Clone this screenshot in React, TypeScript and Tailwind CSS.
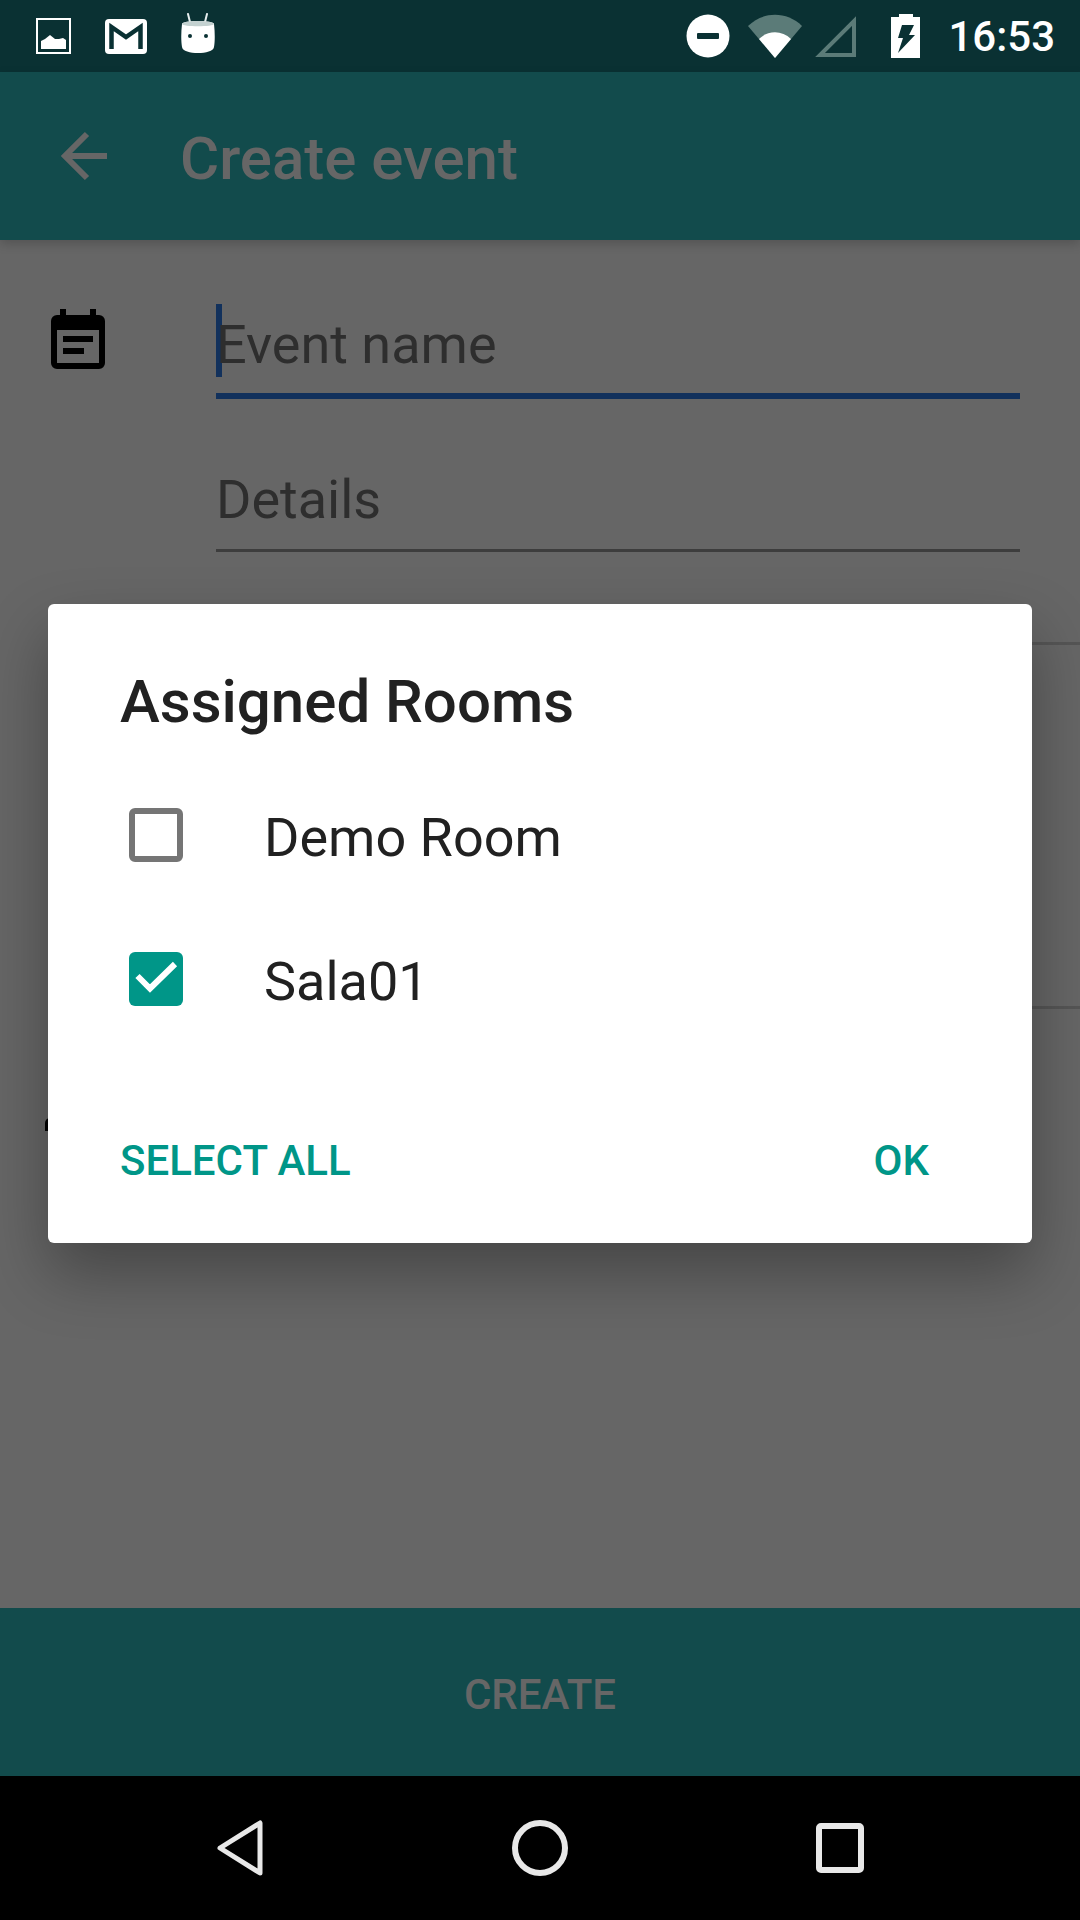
const font = "font-['Roboto',sans-serif]";

const PictureIcon = () => (
  <svg width="35" height="36" viewBox="0 0 35 36" fill="none">
    <rect x="1" y="1" width="33" height="34" stroke="#fff" strokeWidth="2" />
    <path d="M5 23 L9 21 L14 17 L19 21 L23 21 L27 20 L30 22 V31 H5 Z" fill="#fff" />
  </svg>
);

const MailIcon = () => (
  <svg width="42" height="35" viewBox="0 0 42 35">
    <rect width="42" height="35" rx="4" fill="#fff" />
    <path d="M6.5 30 V8 L21 18 L35.5 8 V30" fill="none" stroke="#0a3133" strokeWidth="4.5" />
  </svg>
);

const MarshmallowIcon = () => (
  <svg width="34" height="41" viewBox="0 0 34 41">
    <path d="M7 1 L9 9 M26 1 L24 9" stroke="#e6eeee" strokeWidth="2" strokeLinecap="round" />
    <path d="M1 11 C1 7 33 7 33 11 C34 20 34 28 33 34 C32 42 2 42 1 34 C0 28 0 20 1 11 Z" fill="#fff" />
    <path d="M1 11 C1 7 33 7 33 11 C33 14 1 14 1 11 Z" fill="#c3d1d0" />
    <circle cx="9" cy="23" r="2" fill="#0a3133" />
    <circle cx="25" cy="23" r="2" fill="#0a3133" />
  </svg>
);

const DndIcon = () => (
  <svg width="44" height="44" viewBox="0 0 44 44">
    <circle cx="22" cy="22" r="21.5" fill="#fff" />
    <rect x="11" y="19" width="22" height="6" rx="1" fill="#0a3133" />
  </svg>
);

const WifiIcon = () => (
  <svg width="54" height="44" viewBox="0 0 54 44">
    <path d="M0 12 C15 -3 39 -3 54 12 L27 44 Z" fill="#5b7b78" />
    <path d="M11 25 C20 16 34 16 43 25 L27 44 Z" fill="#fff" />
  </svg>
);

const SignalIcon = () => (
  <svg width="43" height="43" viewBox="0 0 43 43" fill="none">
    <path d="M40 6 V40 H6 Z" stroke="#5b7b78" strokeWidth="4" />
  </svg>
);

const BatteryIcon = () => (
  <svg width="29" height="44" viewBox="0 0 29 44">
    <path
      fillRule="evenodd"
      fill="#fff"
      d="M8 0 H22 V3 H29 V44 H0 V3 H8 Z M11 11 L7 24 H12 L7 39 L24 21 H18 L23 11 Z"
    />
  </svg>
);

const BackArrow = () => (
  <svg width="48" height="50" viewBox="0 0 48 50" fill="none" stroke="#666" strokeWidth="6">
    <path d="M47 25 H6 M27 3 L5 25 L27 47" />
  </svg>
);

const CalendarIcon = () => (
  <svg width="54" height="60" viewBox="0 0 54 60" className="shrink-0">
    <path
      fillRule="evenodd"
      d="M9 0 H15 V6 H39 V0 H45 V6 H48 A6 6 0 0 1 54 12 V54 A6 6 0 0 1 48 60 H6 A6 6 0 0 1 0 54 V12 A6 6 0 0 1 6 6 H9 Z M6 21 V54 H48 V21 Z"
    />
    <rect x="12" y="27" width="30" height="6" />
    <rect x="12" y="39" width="21" height="6" />
  </svg>
);

const Checkbox = ({ checked }: { checked: boolean }) =>
  checked ? (
    <div className="w-[54px] h-[54px] rounded-[6px] bg-[#009688] flex items-center justify-center shrink-0">
      <svg width="54" height="54" viewBox="0 0 54 54" fill="none">
        <path d="M8.5 24 L21 36.5 L46 12" stroke="#fff" strokeWidth="6" />
      </svg>
    </div>
  ) : (
    <div className="w-[54px] h-[54px] rounded-[6px] border-[6px] border-[#757575] bg-white shrink-0" />
  );

const RoomRow = ({ name, checked }: { name: string; checked: boolean }) => (
  <div className="h-[144px] flex items-center pl-[81px]">
    <Checkbox checked={checked} />
    <span className="ml-[81px] mt-[4px] text-[54px] text-[#212121]">{name}</span>
  </div>
);

export default function App() {
  return (
    <div className={`relative w-[1080px] h-[1920px] flex flex-col overflow-hidden bg-[#666] ${font}`}>
      {/* status bar */}
      <div className="h-[72px] bg-[#0a3133] flex items-center shrink-0">
        <div className="ml-[36px]"><PictureIcon /></div>
        <div className="ml-[34px]"><MailIcon /></div>
        <div className="ml-[34px] -mt-[6px]"><MarshmallowIcon /></div>
        <div className="ml-auto"><DndIcon /></div>
        <div className="ml-[18px]"><WifiIcon /></div>
        <div className="ml-[12px]"><SignalIcon /></div>
        <div className="ml-[34px]"><BatteryIcon /></div>
        <span className="ml-[28px] mr-[25px] text-[42px] font-medium text-white">16:53</span>
      </div>

      {/* toolbar */}
      <div className="h-[168px] bg-[#124b4c] flex items-center shrink-0 pl-[60px] shadow-[0_4px_10px_rgba(0,0,0,0.18)] z-10">
        <BackArrow />
        <span className="ml-[72px] mt-[6px] text-[60px] font-medium text-[#666]">Create event</span>
      </div>

      {/* form behind the dialog */}
      <div className="flex-1">
        <div className="flex items-start pl-[51px] pt-[64px]">
          <div className="mt-[5px]"><CalendarIcon /></div>
          <div className="ml-[111px] w-[804px]">
            <div className="h-[95px] border-b-[6px] border-[#12315c] flex items-start">
              <div className="w-[6px] h-[73px] bg-[#12315c] shrink-0" />
              <span className="-ml-[6px] mt-[4px] text-[54px] leading-[73px] text-[#2e2e2e]">Event name</span>
            </div>
            <div className="h-[153px] border-b-[3px] border-[#3d3d3d] flex items-end pb-[13px]">
              <span className="text-[54px] leading-[73px] text-[#2e2e2e]">Details</span>
            </div>
          </div>
        </div>
        <div className="ml-[216px] mt-[90px] h-[3px] bg-[#555]" />
        <div className="ml-[216px] mt-[361px] h-[3px] bg-[#555]" />
        <div className="ml-[45px] mt-[109px] w-[30px] h-[13px] bg-black rounded-tl-[5px]" />
      </div>

      {/* create button */}
      <div className="h-[168px] bg-[#124b4c] flex items-center justify-center shrink-0">
        <span className="mt-[4px] text-[42px] font-medium text-[#666]">CREATE</span>
      </div>

      {/* nav bar */}
      <div className="h-[144px] bg-black flex items-center justify-between pl-[217px] pr-[216px] shrink-0">
        <svg width="46" height="56" viewBox="0 0 46 56" fill="none">
          <path d="M43 3 V53 L3 28 Z" stroke="#e8e8e8" strokeWidth="5" strokeLinejoin="round" />
        </svg>
        <svg width="56" height="56" viewBox="0 0 56 56" fill="none">
          <circle cx="28" cy="28" r="25" stroke="#e8e8e8" strokeWidth="6" />
        </svg>
        <svg width="48" height="50" viewBox="0 0 48 50" fill="none">
          <rect x="3" y="3" width="42" height="44" rx="2" stroke="#e8e8e8" strokeWidth="6" />
        </svg>
      </div>

      {/* dialog */}
      <div className="absolute left-[48px] top-[604px] w-[984px] h-[639px] bg-white rounded-[6px] shadow-[0_30px_64px_rgba(0,0,0,0.32)] z-20 flex flex-col">
        <div className="h-[159px] pl-[72px] pt-[63px]">
          <h2 className="text-[60px] leading-[70px] font-medium text-[#212121]">Assigned Rooms</h2>
        </div>
        <RoomRow name="Demo Room" checked={false} />
        <RoomRow name="Sala01" checked={true} />
        <div className="flex justify-between pl-[72px] pr-[103px] mt-[85px]">
          <span className="text-[42px] leading-[50px] font-medium text-[#009688]">SELECT ALL</span>
          <span className="text-[42px] leading-[50px] font-medium text-[#009688]">OK</span>
        </div>
      </div>
    </div>
  );
}
